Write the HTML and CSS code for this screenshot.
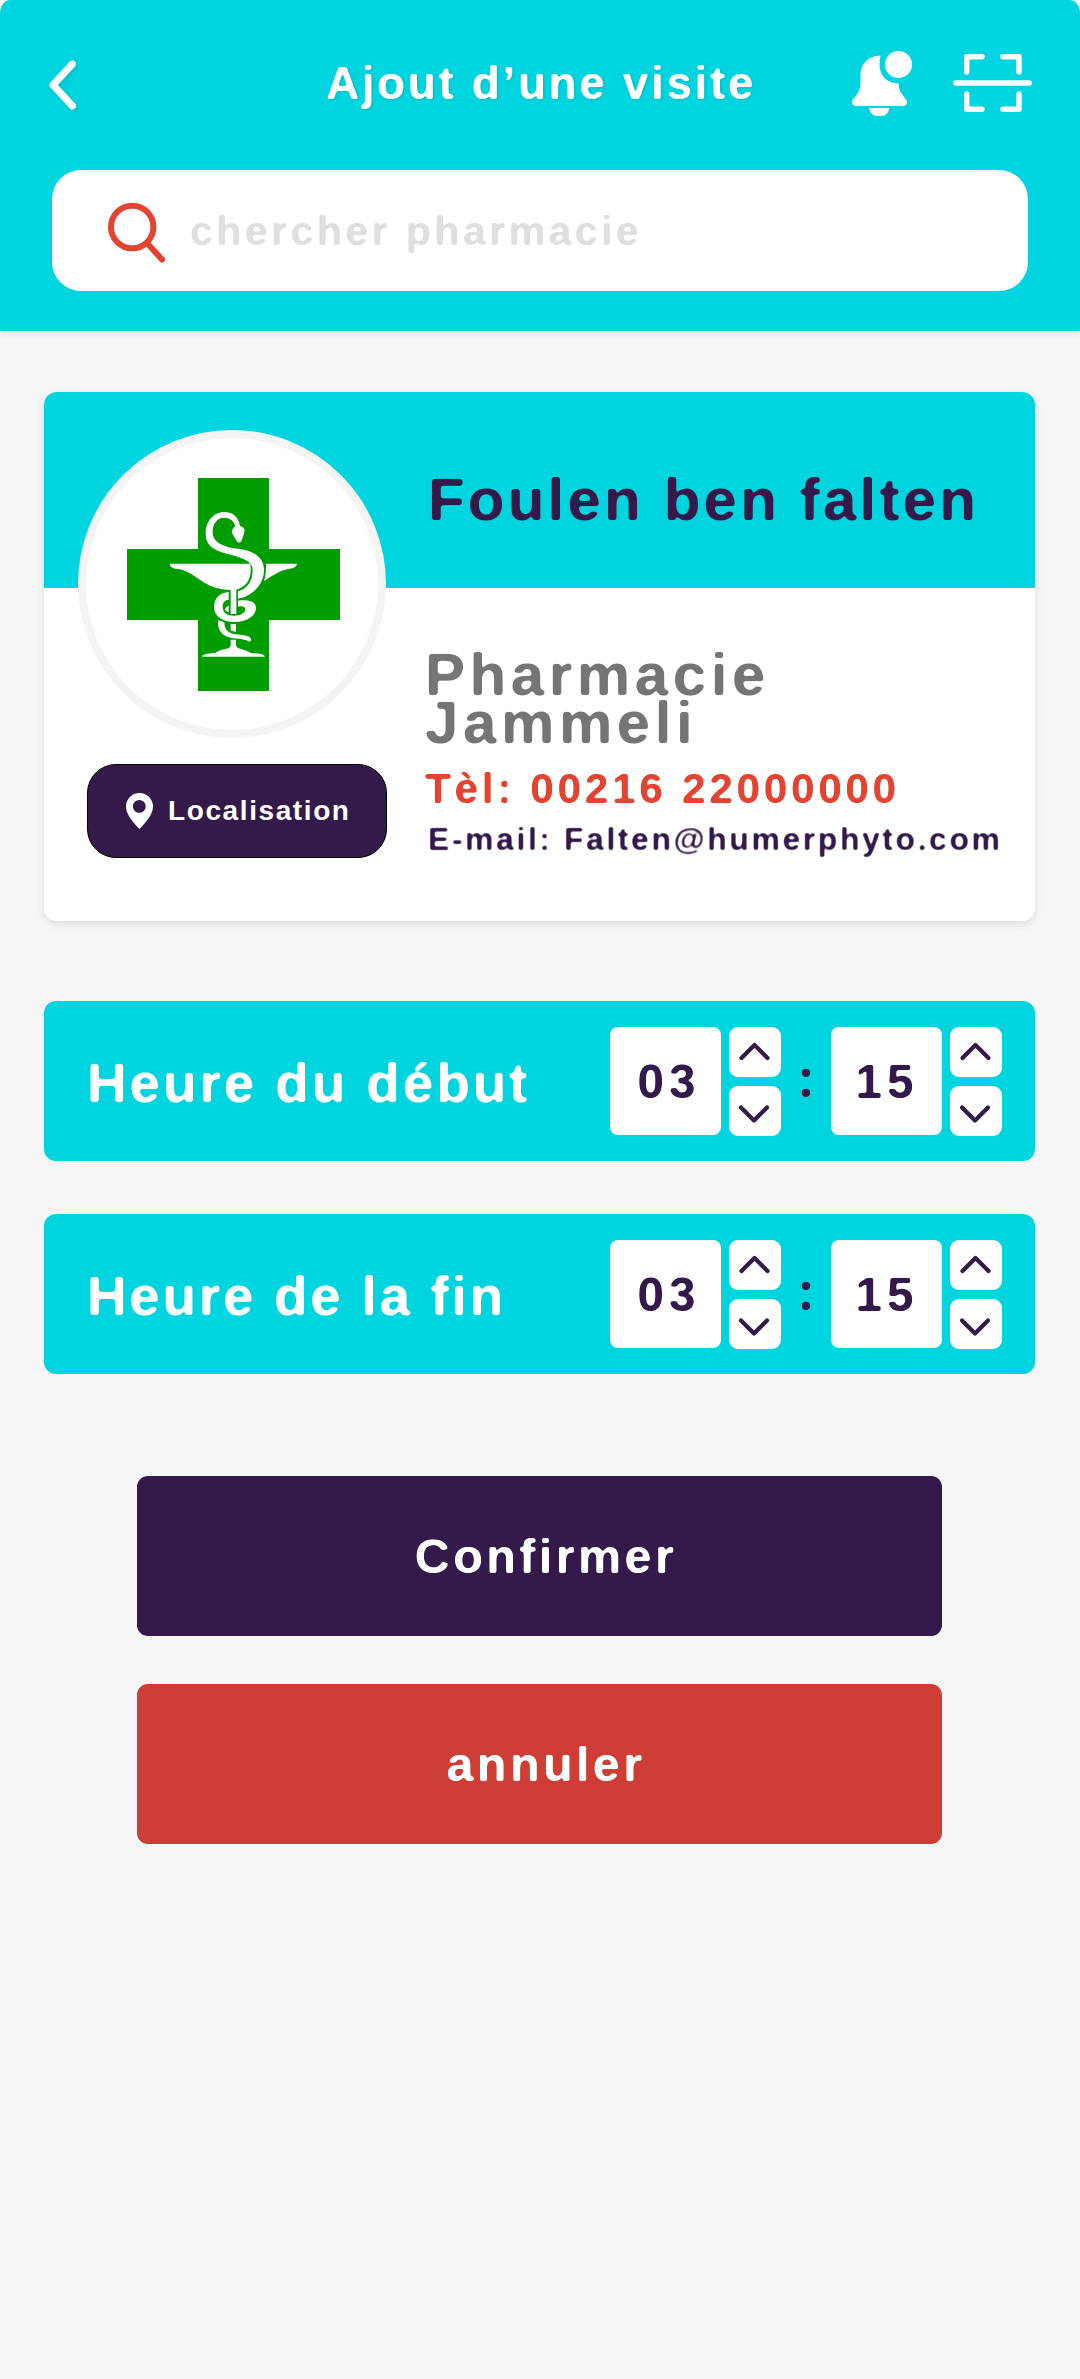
FILE: index.html
```
<!DOCTYPE html>
<html lang="fr">
<head>
<meta charset="utf-8">
<title>Ajout d’une visite</title>
<link rel="stylesheet" href="styles.css">
</head>
<body>
<!-- Filters that soften the corners of the lettering -->
<svg class="defs" width="0" height="0" aria-hidden="true">
  <filter id="round-lg" color-interpolation-filters="sRGB"><feGaussianBlur stdDeviation="1.6"/><feComponentTransfer><feFuncA type="linear" slope="4" intercept="-1.4"/></feComponentTransfer></filter>
  <filter id="round-md" color-interpolation-filters="sRGB"><feGaussianBlur stdDeviation="1.3"/><feComponentTransfer><feFuncA type="linear" slope="3.300" intercept="-1.050"/></feComponentTransfer></filter>
  <filter id="round-sm" color-interpolation-filters="sRGB"><feGaussianBlur stdDeviation="0.8"/><feComponentTransfer><feFuncA type="linear" slope="2.200" intercept="-0.6"/></feComponentTransfer></filter>
</svg>

<header class="header">
  <div class="topbar">
    <svg class="back" viewBox="0 0 30 52" width="30" height="52" fill="none" stroke="#fff" stroke-width="7" stroke-linecap="round" stroke-linejoin="round"><path d="M24.500 5 5 26 24.500 47"/></svg>
    <h1 class="title">Ajout d’une visite</h1>
    <div class="actions">
      <svg viewBox="0 0 62 66" width="62" height="66" fill="#fff"><path d="M28.500 5.500C14.500 6 8.500 15.500 8.500 25V32C8.500 39 6 43.500 3 47C.5 49.500 0 50.500 0 52Q.3 56 4 56H51.500Q55 55.500 55 52C55 50.500 54 49 52 47C49 43.500 46.500 39 46.500 33.500C35 33 27.500 26 27.500 14.500Q27.500 10 28.500 5.500ZM17 58H37.500Q35.500 66 29.500 66H25Q19 66 17 58Z"/><circle cx="46.500" cy="14.500" r="13.600"/></svg>
      <svg viewBox="0 0 79 60" width="79" height="60" fill="none" stroke="#fff" stroke-width="5.400" stroke-linecap="round" stroke-linejoin="round"><path d="M2.700 30H76.300M13.700 19V3.700H29M50 3.700H66V19M13.700 41V56.300H29M50 56.300H66V41"/></svg>
    </div>
  </div>
  <div class="search">
    <svg viewBox="0 0 58 62" width="58" height="62" fill="none" stroke="#e34432" stroke-width="6" stroke-linecap="round"><ellipse cx="24.200" cy="25" rx="21.200" ry="21.300"/><path d="M39.500 41.500 54 57.500"/></svg>
    <span class="placeholder">chercher pharmacie</span>
  </div>
</header>

<main class="main">
  <section class="card">
    <div class="card-side">
      <div class="avatar">
        <svg viewBox="291 294 639 639" width="213" height="213">
          <path fill="#009d00" d="M504 294h213v213h213v213H717v213H504V720H291V507h213z"/>
          <g fill="#fff">
            <path d="M419 551H661C667 590 655 618 618 630H600C540 628 512 600 490 586C465 570 452 567 437 566C425 564 420 558 419 551Z"/>
            <path d="M708 551H801C800 560 790 565 778 566C750 570 730 585 702 603C708 585 708 570 708 551Z"/>
            <path d="M602 628H619V702H602ZM602 732H618V755L602 752ZM602 779H618V795C618 806 636 807 648 812Q658 816 665 820C680 820 700 820 705 830H516C520 820 540 820 555 819C575 804 602 810 602 795Z"/>
            <path d="M630 438C625 406 603 396 583 396C550 396 527 425 527 460C527 500 555 512 590 521C625 530 658 538 667 560C671 595 658 623 624 634V656C670 649 702 610 702 570C702 525 660 508 610 505C570 495 548 485 548 455C548 430 562 413 583 413C600 413 613 424 616 439C608 445 604 452 606 459L620 483Q628 492 634 484C640 466 645 456 643 447Q637 438 630 438Z"/>
            <path d="M596 636C570 637 552 655 552 682C552 710 580 726 612 726C650 726 678 708 678 684C678 664 655 658 624 662V680C636 677 646 680 646 688C645 700 630 707 612 707C592 707 578 698 578 680C578 666 585 660 596 659Z"/>
            <path d="M596 677Q583 683 585 691L596 697Z"/>
            <path d="M565 720 583 727C583 748 592 758 615 763C640 766 662 765 664 781L658 785C645 776 620 777 605 774C575 768 560 748 565 720Z"/>
          </g>
        </svg>
      </div>
      <button class="locate">
        <svg viewBox="0 0 27 36" width="27" height="36"><path fill="#fff" fill-rule="evenodd" d="M13.500 0A13.500 13.500 0 0 1 27 13.500C27 22 19 30 13.500 36C8 30 0 22 0 13.500A13.500 13.500 0 0 1 13.500 0ZM13.300 7A6.400 6.400 0 1 0 13.300 19.800A6.400 6.400 0 1 0 13.300 7Z"/></svg>
        <span>Localisation</span>
      </button>
    </div>
    <div class="card-info">
      <h2 class="name">Foulen ben falten</h2>
      <p class="pharmacy">Pharmacie<br>Jammeli</p>
      <p class="tel">Tèl: 00216 22000000</p>
      <p class="email">E-mail: Falten@humerphyto.com</p>
    </div>
  </section>

  <section class="times">
    <div class="time">
      <span class="time-label">Heure du début</span>
      <div class="picker">
        <div class="value"><span>03</span></div>
        <div class="spin">
          <button class="step"><svg viewBox="0 0 52 50" width="52" height="50"><path d="M12.500 31 25.500 18 38.500 31"/></svg></button>
          <button class="step"><svg viewBox="0 0 52 50" width="52" height="50"><path d="M12 21.500 25 34.500 38 21.500"/></svg></button>
        </div>
        <span class="colon">:</span>
        <div class="value minutes"><span>15</span></div>
        <div class="spin">
          <button class="step"><svg viewBox="0 0 52 50" width="52" height="50"><path d="M12.500 31 25.500 18 38.500 31"/></svg></button>
          <button class="step"><svg viewBox="0 0 52 50" width="52" height="50"><path d="M12 21.500 25 34.500 38 21.500"/></svg></button>
        </div>
      </div>
    </div>
    <div class="time">
      <span class="time-label end">Heure de la fin</span>
      <div class="picker">
        <div class="value"><span>03</span></div>
        <div class="spin">
          <button class="step"><svg viewBox="0 0 52 50" width="52" height="50"><path d="M12.500 31 25.500 18 38.500 31"/></svg></button>
          <button class="step"><svg viewBox="0 0 52 50" width="52" height="50"><path d="M12 21.500 25 34.500 38 21.500"/></svg></button>
        </div>
        <span class="colon">:</span>
        <div class="value minutes"><span>15</span></div>
        <div class="spin">
          <button class="step"><svg viewBox="0 0 52 50" width="52" height="50"><path d="M12.500 31 25.500 18 38.500 31"/></svg></button>
          <button class="step"><svg viewBox="0 0 52 50" width="52" height="50"><path d="M12 21.500 25 34.500 38 21.500"/></svg></button>
        </div>
      </div>
    </div>
  </section>

  <div class="buttons">
    <button class="btn confirm"><span>Confirmer</span></button>
    <button class="btn cancel"><span>annuler</span></button>
  </div>
</main>
</body>
</html>
```
FILE: styles.css
```
* { box-sizing: border-box; }

html { background: #fff; }

body {
  margin: 0;
  min-height: 2379px;
  background: linear-gradient(#fff 40px, #f6f6f6 40px);
  font-family: "Arial Rounded MT Bold", "Liberation Sans", Arial, sans-serif;
  font-weight: 700;
}

h1, h2, p { margin: 0; font-weight: 700; white-space: nowrap; }

svg { display: block; flex: none; }

.defs { position: absolute; }

button {
  border: 0;
  padding: 0;
  font: inherit;
  color: #fff;
}

/* Header */
.header {
  height: 331px;
  padding-top: 50px;
  background: #00d5df;
  border-radius: 10px 10px 0 0 / 14px 14px 0 0;
  box-shadow: 0 2px 6px rgba(0, 0, 0, 0.12);
}

.topbar {
  display: grid;
  grid-template-columns: 180px 1fr 180px;
  align-items: center;
  height: 66px;
  padding: 0 48px;
}

.back { margin-top: 3px; filter: drop-shadow(2px 2px 2px rgba(0, 0, 0, 0.1)); }

.title {
  padding-left: 2px;
  color: #fff;
  font-size: 46px;
  letter-spacing: 2.6px;
  line-height: 66px;
  text-align: center;
  filter: url(#round-md) drop-shadow(1.5px 1.5px 1.5px rgba(0, 0, 0, 0.12));
}

.actions {
  display: flex;
  align-items: center;
  justify-content: space-between;
}

.search {
  display: flex;
  align-items: center;
  gap: 24px;
  height: 121px;
  margin: 54px 52px 0;
  padding-left: 56px;
  background: #fff;
  border-radius: 29px;
}

.search svg { margin-top: 5px; }

.placeholder {
  color: #dfdfdf;
  font-size: 41.5px;
  letter-spacing: 3.2px;
  filter: url(#round-md);
}

/* Pharmacy card */
.main { padding: 0 45px 0 44px; }

.card {
  display: grid;
  grid-template-columns: 381px 1fr;
  height: 529px;
  margin-top: 61px;
  background: linear-gradient(#00d5df 196px, #fff 196px);
  border-radius: 13px;
  box-shadow: 0 3px 8px rgba(0, 0, 0, 0.1);
}

.card-side { padding: 38px 0 0 34px; }

.avatar {
  display: flex;
  align-items: center;
  justify-content: center;
  width: 308px;
  height: 308px;
  padding-left: 3px;
  background: #fff;
  border: 8px solid #f4f4f4;
  border-radius: 50%;
}

.locate {
  display: flex;
  align-items: center;
  gap: 15px;
  width: 300px;
  height: 94px;
  margin: 26px 0 0 9px;
  padding-left: 38px;
  background: #331a4a;
  border: 1px solid #000;
  border-radius: 29px;
  font-size: 28px;
  letter-spacing: 1.6px;
}

.name {
  height: 196px;
  padding: 20px 0 0 3px;
  color: #331a4a;
  font-size: 60px;
  letter-spacing: 3.2px;
  line-height: 176px;
  filter: url(#round-lg);
}

.pharmacy {
  margin-top: 63px;
  color: #757575;
  font-size: 60px;
  letter-spacing: 4.6px;
  line-height: 48px;
  filter: url(#round-lg);
}

.tel {
  margin-top: 19px;
  color: #e34432;
  font-size: 42.5px;
  letter-spacing: 3.6px;
  line-height: 46px;
  filter: url(#round-md);
}

.email {
  margin-top: 10px;
  padding-left: 3px;
  color: #331a4a;
  font-size: 32px;
  letter-spacing: 2.55px;
  line-height: 34px;
  filter: url(#round-sm);
}

/* Time rows */
.times {
  display: grid;
  gap: 53px;
  margin-top: 80px;
}

.time {
  display: flex;
  align-items: center;
  justify-content: space-between;
  height: 160px;
  padding: 0 33px 0 43px;
  background: #00d5df;
  border-radius: 12px;
}

.time-label {
  padding-top: 3px;
  color: #fff;
  font-size: 55px;
  letter-spacing: 2.85px;
  filter: url(#round-lg);
}

.time-label.end { letter-spacing: 2.65px; }

.picker { display: flex; color: #331a4a; }

.value {
  width: 111px;
  height: 108px;
  margin-right: 8px;
  padding-left: 7px;
  background: #fff;
  border-radius: 8px;
  font-size: 47.5px;
  letter-spacing: 5px;
  line-height: 110px;
  text-align: center;
}

.value span { display: block; filter: url(#round-md); }

.value.minutes { padding-left: 1px; }

.spin { display: grid; gap: 9px; }

.step {
  width: 52px;
  height: 50px;
  background: #fff;
  border-radius: 9px;
}

.step path {
  fill: none;
  stroke: #331a4a;
  stroke-width: 4.2;
  stroke-linecap: round;
  stroke-linejoin: round;
}

.colon {
  width: 50px;
  font-family: Lato, sans-serif;
  font-size: 56px;
  line-height: 98px;
  text-align: center;
}

/* Bottom buttons */
.buttons {
  display: grid;
  gap: 48px;
  width: 805px;
  margin: 102px 0 0 93px;
}

.btn {
  height: 160px;
  padding-left: 13px;
  border-radius: 11px;
  font-size: 48.5px;
  letter-spacing: 3.4px;
  text-align: center;
}

.btn span { display: inline-block; filter: url(#round-md); }

.confirm { background: #331a4a; }
.cancel { background: #cf3e36; }
```
